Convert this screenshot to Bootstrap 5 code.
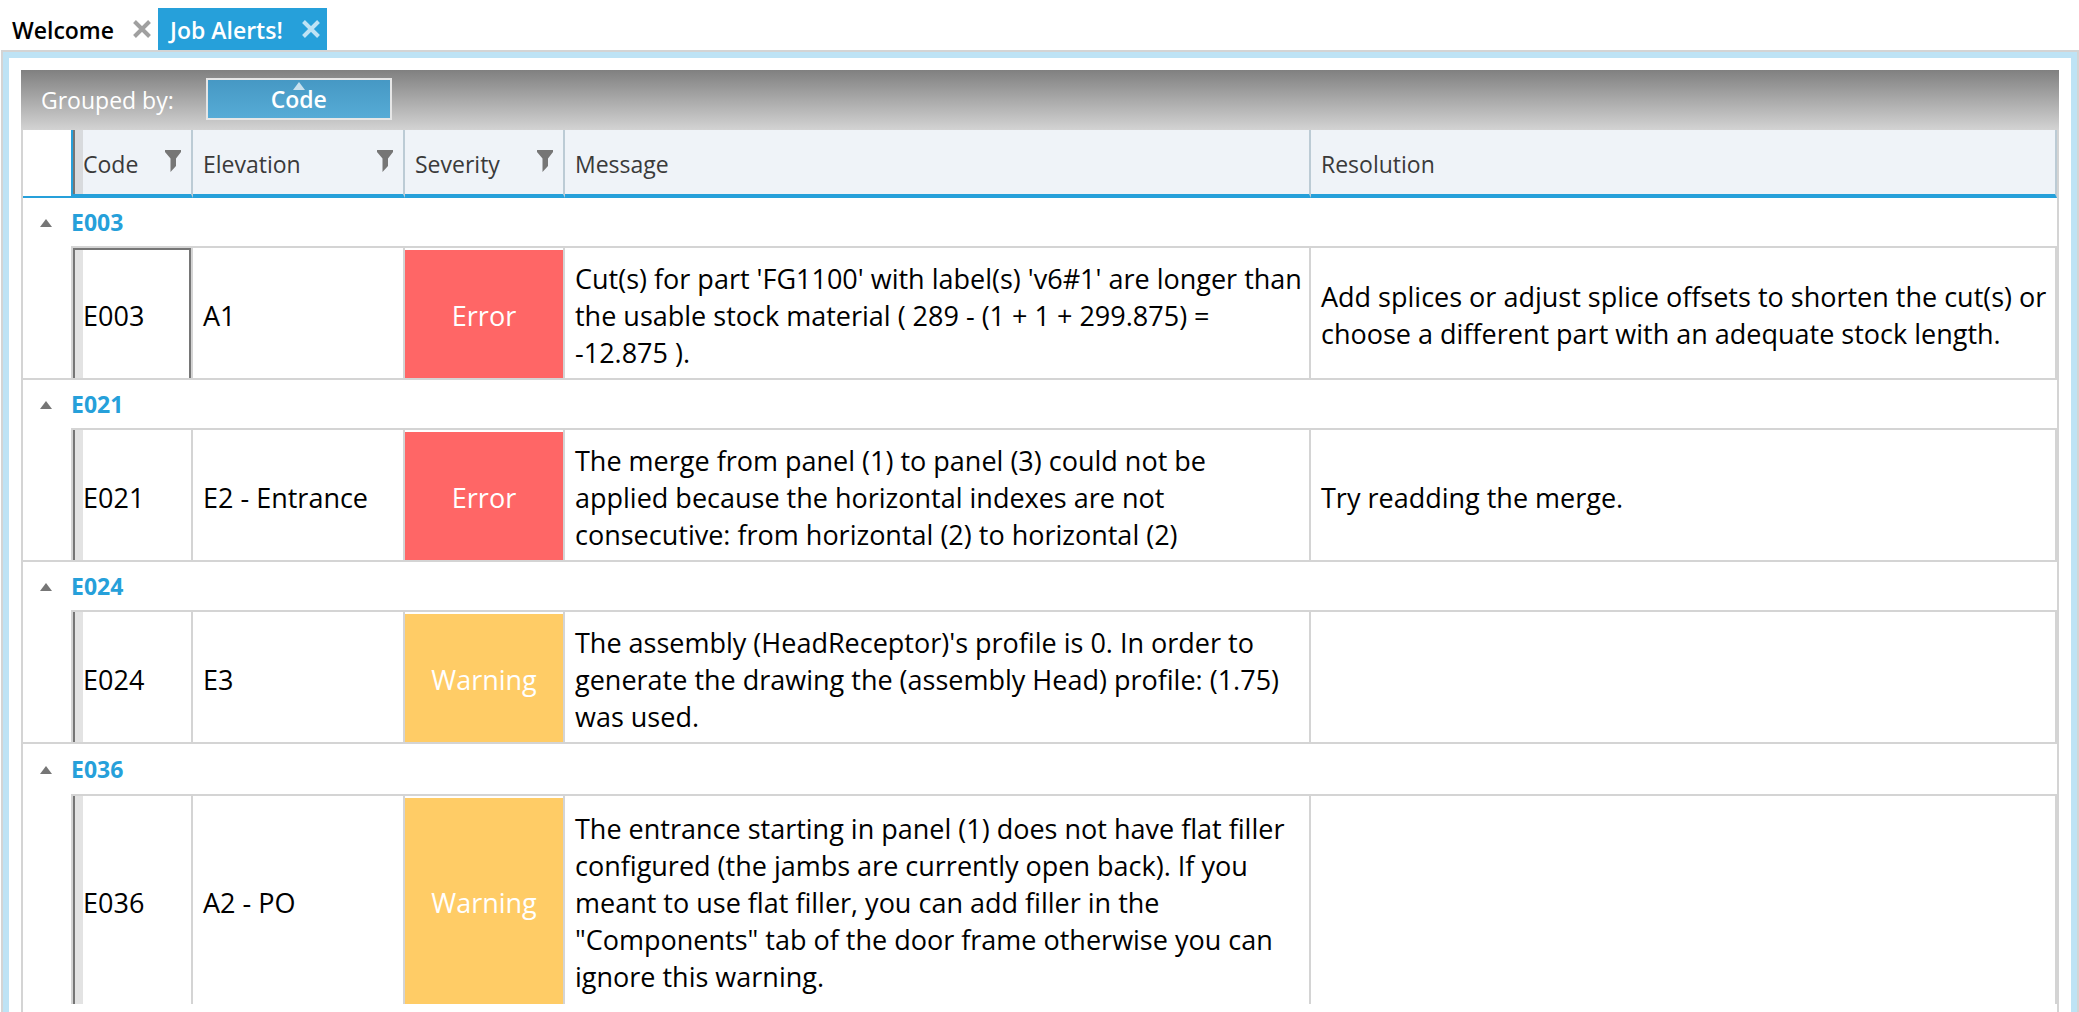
<!DOCTYPE html>
<html lang="en">
<head>
<meta charset="utf-8">
<meta name="viewport" content="width=device-width, initial-scale=1">
<title>Job Alerts!</title>
<link href="https://cdn.jsdelivr.net/npm/bootstrap@5.3.0/dist/css/bootstrap.min.css" rel="stylesheet">
<style>
  :root { --accent: #26a0da; --line: #d4d4d4; --dark: #767676; }
  body { font-family: "Open Sans", "Noto Sans", sans-serif; font-size: 27px; line-height: 37px; color: #000; background: #fff; }
  button { font-family: inherit; }

  /* document tabs */
  .doc-tabs { padding-top: 8px; height: 50px; font-size: 23px; font-weight: 600; }
  .doc-tab { height: 42px; padding: 0 7px 0 12px; gap: 19px; }
  .doc-tab a { color: #000; text-decoration: none; padding-top: 3px; }
  .doc-tab .close-x { color: #a0a0a0; }
  .doc-tab.current { background: var(--accent); }
  .doc-tab.current a { color: #fff; }
  .doc-tab.current .close-x { color: #bee3f5; }
  .plain-btn { border: 0; background: none; padding: 0; line-height: 0; display: block; }

  /* frame round the alert grid */
  .doc-frame { margin-left: 1px; border: 2px solid var(--line); border-bottom: 0; }
  .doc-glow { border: 6px solid #bee3f5; border-bottom: 0; padding: 12px 12px 0; }
  .group-bar { height: 60px; padding: 0 20px 2px; gap: 32px; background: linear-gradient(#808080, #d3d3d3); color: #fff; font-size: 23px; }
  .group-bar span { padding-top: 3px; }
  .group-chip { width: 186px; height: 42px; border: 2px solid #e6e6e6; background: linear-gradient(#4698c4, #56abd6); color: #fff; font-weight: 600; line-height: 1; }
  .chip-arrow { top: 2px; left: 50%; margin-left: 0; transform: translateX(-50%); }
  .grid-box { border: 2px solid var(--line); border-top: 0; border-bottom: 0; }

  /* alert table */
  .alerts { width: 100%; table-layout: fixed; border-collapse: separate; border-spacing: 0; }
  .alerts th, .alerts td { vertical-align: middle; border: 0 solid var(--line); }
  .alerts .c-gap { width: 48px; } .alerts .c-code { width: 122px; } .alerts .c-elev { width: 212px; } .alerts .c-sev { width: 160px; }
  .alerts thead th { height: 68px; padding: 4px 10px 0; font-size: 23px; font-weight: 400; color: #3a3a3a; background: #eff3f8; border-right: 2px solid #bccbd5; border-bottom: 4px solid var(--accent); }
  .alerts thead th.gap-head { background: #fff; border-right: 0; border-bottom-width: 2px; }
  .alerts thead th.code-head { border-left: 2px solid var(--accent); background: linear-gradient(90deg, var(--dark) 2px, #d8dadd 2px 10px, #eff3f8 10px); }
  .alerts .filter { margin-bottom: 6px; }
  .alerts tr.group-row th { height: 50px; padding: 0; border-top: 2px solid var(--line); color: var(--accent); font-size: 23px; font-weight: 700; line-height: 30px; }
  .alerts tbody:first-of-type tr.group-row th { height: 48px; border-top: 0; }
  .alerts .toggle { margin: 0 auto 0 17px; padding: 4px 0 2px; }
  .alerts tr.alert-row td { height: 132px; border-width: 2px 2px 0 0; padding: 11px 6px 7px 10px; }
  .alerts tr.alert-row td.gap-cell { border: 0; }
  .alerts tr.alert-row td.code-cell { border-left-width: 2px; background: linear-gradient(90deg, var(--dark) 2px, #e3e3e3 2px 10px, #fff 10px); }
  .alerts td.focused { box-shadow: inset -2px 0 var(--dark), inset 0 2px var(--dark); }
  .alerts tr.alert-row td.sev { padding: 11px 0 7px; text-align: center; color: #fff; box-shadow: inset 0 2px #fff; }
  .alerts .sev-error { background: #f66; }
  .alerts .sev-warning { background: #fc6; }
  .alerts tbody:last-of-type tr.group-row th { height: 52px; }
  .alerts tbody:last-of-type tr.alert-row td { height: 210px; }
</style>
<script defer src="https://cdn.jsdelivr.net/npm/bootstrap@5.3.0/dist/js/bootstrap.bundle.min.js"></script>
</head>
<body>
<svg class="d-none" aria-hidden="true">
  <symbol id="i-x" viewBox="0 0 18 18"><path d="M1.500 1.500L16.500 16.500M16.500 1.500L1.500 16.500" stroke="currentColor" stroke-width="4" fill="none"/></symbol>
  <symbol id="i-funnel" viewBox="0 0 16 22"><path d="M0 0H16V2L11 8.500V16L5.500 22V8.500L0 2Z" fill="#767676"/></symbol>
  <symbol id="i-up" viewBox="0 0 12 8"><path d="M6 0L12 8H0Z" fill="currentColor"/></symbol>
</svg>
<div class="d-flex flex-column min-vh-100">
  <nav class="doc-tabs d-flex" aria-label="Documents">
    <div class="doc-tab d-flex align-items-center">
      <a href="#welcome">Welcome</a>
      <button class="plain-btn close-x" type="button" aria-label="Close Welcome"><svg width="18" height="18"><use href="#i-x"/></svg></button>
    </div>
    <div class="doc-tab current d-flex align-items-center">
      <a href="#alerts" aria-current="page">Job Alerts!</a>
      <button class="plain-btn close-x" type="button" aria-label="Close Job Alerts!"><svg width="18" height="18"><use href="#i-x"/></svg></button>
    </div>
  </nav>
  <main id="alerts" class="doc-frame flex-grow-1 d-flex">
    <div class="doc-glow flex-grow-1 d-flex flex-column">
      <div class="group-bar d-flex align-items-center">
        <span>Grouped by:</span>
        <button class="group-chip position-relative" type="button">Code<svg class="chip-arrow position-absolute" width="12" height="8" opacity=".7"><use href="#i-up"/></svg></button>
      </div>
      <div class="grid-box flex-grow-1">
        <table class="alerts">
          <colgroup><col class="c-gap"><col class="c-code"><col class="c-elev"><col class="c-sev"><col><col></colgroup>
          <thead>
            <tr>
              <th class="gap-head"></th>
              <th class="code-head" scope="col"><div class="d-flex justify-content-between align-items-center">Code<button class="plain-btn filter" type="button" aria-label="Filter Code"><svg width="16" height="22"><use href="#i-funnel"/></svg></button></div></th>
              <th scope="col"><div class="d-flex justify-content-between align-items-center">Elevation<button class="plain-btn filter" type="button" aria-label="Filter Elevation"><svg width="16" height="22"><use href="#i-funnel"/></svg></button></div></th>
              <th scope="col"><div class="d-flex justify-content-between align-items-center">Severity<button class="plain-btn filter" type="button" aria-label="Filter Severity"><svg width="16" height="22"><use href="#i-funnel"/></svg></button></div></th>
              <th scope="col">Message</th>
              <th scope="col">Resolution</th>
            </tr>
          </thead>
          <tbody>
            <tr class="group-row"><th><button class="plain-btn toggle" type="button" aria-label="Collapse E003"><svg width="12" height="8" color="#767676"><use href="#i-up"/></svg></button></th><th colspan="5" scope="rowgroup">E003</th></tr>
            <tr class="alert-row"><td class="gap-cell"></td><td class="code-cell focused">E003</td><td>A1</td><td class="sev sev-error">Error</td><td>Cut(s) for part 'FG1100' with label(s) 'v6#1' are longer than the usable stock material ( 289 - (1 + 1 + 299.875) = <span class="text-nowrap">-12.875 ).</span></td><td>Add splices or adjust splice offsets to shorten the cut(s) or choose a different part with an adequate stock length.</td></tr>
          </tbody>
          <tbody>
            <tr class="group-row"><th><button class="plain-btn toggle" type="button" aria-label="Collapse E021"><svg width="12" height="8" color="#767676"><use href="#i-up"/></svg></button></th><th colspan="5" scope="rowgroup">E021</th></tr>
            <tr class="alert-row"><td class="gap-cell"></td><td class="code-cell">E021</td><td>E2 - Entrance</td><td class="sev sev-error">Error</td><td>The merge from panel (1) to panel (3) could not be applied because the horizontal indexes are not consecutive: from horizontal (2) to horizontal (2)</td><td>Try readding the merge.</td></tr>
          </tbody>
          <tbody>
            <tr class="group-row"><th><button class="plain-btn toggle" type="button" aria-label="Collapse E024"><svg width="12" height="8" color="#767676"><use href="#i-up"/></svg></button></th><th colspan="5" scope="rowgroup">E024</th></tr>
            <tr class="alert-row"><td class="gap-cell"></td><td class="code-cell">E024</td><td>E3</td><td class="sev sev-warning">Warning</td><td>The assembly (HeadReceptor)'s profile is 0. In order to generate the drawing the (assembly Head) profile: (1.75) was used.</td><td></td></tr>
          </tbody>
          <tbody>
            <tr class="group-row"><th><button class="plain-btn toggle" type="button" aria-label="Collapse E036"><svg width="12" height="8" color="#767676"><use href="#i-up"/></svg></button></th><th colspan="5" scope="rowgroup">E036</th></tr>
            <tr class="alert-row"><td class="gap-cell"></td><td class="code-cell">E036</td><td>A2 - PO</td><td class="sev sev-warning">Warning</td><td>The entrance starting in panel (1) does not have flat filler configured (the jambs are currently open back). If you meant to use flat filler, you can add filler in the "Components" tab of the door frame otherwise you can ignore this warning.</td><td></td></tr>
          </tbody>
        </table>
      </div>
    </div>
  </main>
</div>
</body>
</html>
